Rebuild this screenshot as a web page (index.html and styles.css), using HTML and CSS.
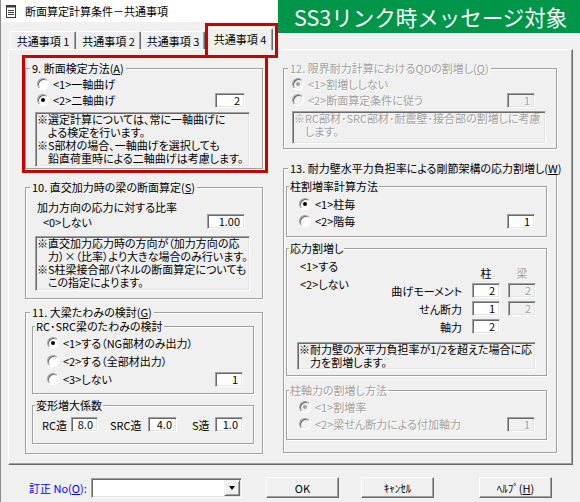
FILE: index.html
```html
<!DOCTYPE html>
<html lang="ja">
<head>
<meta charset="utf-8">
<title>断面算定計算条件－共通事項</title>
<link rel="stylesheet" href="styles.css">
</head>
<body>
<div class="window">
  <div class="titlebar">
    <svg class="app-icon" width="10" height="13" viewBox="0 0 10 13"><rect x="0.5" y="0.5" width="9" height="12" fill="#fff" stroke="#3c3c3c"/><rect x="0.5" y="0.5" width="9" height="2" fill="#3c3c3c"/><path d="M2 5.5h6M2 7.5h6M2 9.5h6" stroke="#3c3c3c"/></svg>
    <span class="title">断面算定計算条件－共通事項</span>
  </div>
  <div class="tabs">
    <div class="tab t1">共通事項 1</div>
    <div class="tab t2">共通事項 2</div>
    <div class="tab t3">共通事項 3</div>
    <div class="tab t4 active">共通事項 4</div>
  </div>
  <div class="panel">
    <div class="col col-left">
      <fieldset class="group g9">
        <legend>9. 断面検定方法(<u>A</u>)</legend>
        <div class="gbody">
          <div class="opt"><span class="radio"></span><span>&lt;1&gt;一軸曲げ</span></div>
          <div class="opt"><span class="radio on"></span><span>&lt;2&gt;二軸曲げ</span><span class="field">2</span></div>
          <div class="note">
            <p>※選定計算については、常に一軸曲げに<br>よる検定を行います。</p>
            <p>※S部材の場合、一軸曲げを選択しても<br>鉛直荷重時による二軸曲げは考慮します。</p>
          </div>
        </div>
      </fieldset>
      <fieldset class="group g10">
        <legend>10. 直交加力時の梁の断面算定(<u>S</u>)</legend>
        <div class="gbody">
          <div class="ratio-label">加力方向の応力に対する比率</div>
          <div class="ratio-row"><span>&lt;0&gt;しない</span><span class="field">1.00</span></div>
          <div class="note">
            <p>※直交加力応力時の方向が（加力方向の応<br>力）×（比率）より大きな場合のみ行います。</p>
            <p>※S柱梁接合部パネルの断面算定についても<br>この指定によります。</p>
          </div>
        </div>
      </fieldset>
      <fieldset class="group g11">
        <legend>11. 大梁たわみの検討(<u>G</u>)</legend>
        <div class="gbody">
          <fieldset class="group sub s11a">
            <legend>RC･SRC梁のたわみの検討</legend>
            <div class="gbody">
              <div class="opt"><span class="radio on"></span><span>&lt;1&gt;する（NG部材のみ出力）</span></div>
              <div class="opt"><span class="radio"></span><span>&lt;2&gt;する（全部材出力）</span></div>
              <div class="opt"><span class="radio"></span><span>&lt;3&gt;しない</span><span class="field">1</span></div>
            </div>
          </fieldset>
          <fieldset class="group sub s11b">
            <legend>変形増大係数</legend>
            <div class="gbody">
              <div class="coef-row">
                <span class="lbl l-rc">RC造</span><span class="field f-rc">8.0</span>
                <span class="lbl l-src">SRC造</span><span class="field f-src">4.0</span>
                <span class="lbl l-s">S造</span><span class="field f-s">1.0</span>
              </div>
            </div>
          </fieldset>
        </div>
      </fieldset>
    </div>
    <div class="col col-right">
      <fieldset class="group g12 disabled">
        <legend>12. 限界耐力計算におけるQDの割増し(<u>Q</u>)</legend>
        <div class="gbody">
          <div class="opt"><span class="radio on"></span><span>&lt;1&gt;割増ししない</span></div>
          <div class="opt"><span class="radio"></span><span>&lt;2&gt;断面算定条件に従う</span><span class="field">1</span></div>
          <div class="note">
            <p>※RC部材･SRC部材･耐震壁･接合部の割増しに考慮<br>します。</p>
          </div>
        </div>
      </fieldset>
      <fieldset class="group g13">
        <legend>13. 耐力壁水平力負担率による剛節架構の応力割増し(<u>W</u>)</legend>
        <div class="gbody">
          <fieldset class="group sub s13a">
            <legend>柱割増率計算方法</legend>
            <div class="gbody">
              <div class="opt"><span class="radio on"></span><span>&lt;1&gt;柱毎</span></div>
              <div class="opt"><span class="radio"></span><span>&lt;2&gt;階毎</span><span class="field">1</span></div>
            </div>
          </fieldset>
          <fieldset class="group sub s13b">
            <legend>応力割増し</legend>
            <div class="gbody">
              <div class="stress">
                <div class="flags">
                  <div>&lt;1&gt;する</div>
                  <div>&lt;2&gt;しない</div>
                </div>
                <div class="grid">
                  <span></span><span class="hd">柱</span><span class="hd hd-off">梁</span>
                  <span class="rl">曲げモーメント</span><span class="field">2</span><span class="cell-b"><span class="field off">2</span></span>
                  <span class="rl">せん断力</span><span class="field">1</span><span class="cell-b"><span class="field off">2</span></span>
                  <span class="rl">軸力</span><span class="field">2</span><span></span>
                </div>
              </div>
              <div class="note">
                <p>※耐力壁の水平力負担率が1/2を超えた場合に応<br>力を割増します。</p>
              </div>
            </div>
          </fieldset>
          <fieldset class="group sub s13c disabled">
            <legend>柱軸力の割増し方法</legend>
            <div class="gbody">
              <div class="opt"><span class="radio on"></span><span>&lt;1&gt;割増率</span></div>
              <div class="opt"><span class="radio"></span><span>&lt;2&gt;梁せん断力による付加軸力</span><span class="field">1</span></div>
            </div>
          </fieldset>
        </div>
      </fieldset>
    </div>
  </div>
  <div class="footer">
    <span class="fix-label">訂正 No(<u>O</u>):</span>
    <div class="combo"><span class="combo-btn"><span class="tri"></span></span></div>
    <div class="btn b-ok">OK</div>
    <div class="btn b-cancel">ｷｬﾝｾﾙ</div>
    <div class="btn b-help">ﾍﾙﾌﾟ(<u>H</u>)</div>
  </div>

  <div class="banner">SS3リンク時メッセージ対象</div>
  <div class="mark mark-tab"></div>
  <div class="mark mark-g9"></div>
</div>
</body>
</html>
```

FILE: styles.css
```css
* { box-sizing: border-box; }
html, body { margin: 0; padding: 0; }
body {
  width: 580px;
  height: 502px;
  overflow: hidden;
  background: #f0f0f0;
  font-family: "Noto Sans CJK JP", "Noto Sans", sans-serif;
  font-size: 11px;
  line-height: 14px;
  color: #000;
  font-feature-settings: "palt";
}
u { text-underline-offset: 1px; }
p { margin: 0; }

.window {
  position: relative;
  width: 580px;
  height: 502px;
  border-left: 1px solid #8c8c8c;
  background: #f0f0f0;
}

/* title bar */
.titlebar {
  height: 22px;
  background: #fff;
  display: flex;
  align-items: center;
  padding-left: 5px;
  gap: 9px;
}
.app-icon { flex: none; }
.title { font-size: 11px; }

/* tabs */
.tabs {
  height: 27px;
  display: flex;
  align-items: flex-end;
  padding-left: 9px;
  position: relative;
  z-index: 2;
}
.tab {
  height: 18px;
  display: flex;
  align-items: center;
  justify-content: center;
  border-top: 1px solid #fff;
  border-left: 1px solid #fff;
  border-right: 1px solid #696969;
  box-shadow: inset -1px 0 0 #a0a0a0;
  border-radius: 2px 2px 0 0;
  background: #f0f0f0;
  white-space: nowrap;
}
.t1 { width: 66px; }
.t2 { width: 65px; border-left-color: #f0f0f0; }
.t3 { width: 64px; border-left-color: #f0f0f0; }
.t4 { width: 66px; margin-left: 2px; }
.tab.active {
  height: 22px;
  margin-bottom: -1px;
  padding-bottom: 2px;
}

/* panel */
.panel {
  height: 416px;
  width: 565px;
  margin-left: 7px;
  border: 1px solid;
  border-color: #fff #696969 #696969 #fff;
  box-shadow: inset -1px -1px 0 #a0a0a0;
  display: flex;
  gap: 20px;
  padding: 11px 0 0 16px;
}
.col { display: flex; flex-direction: column; }
.col-left { width: 238px; }
.col-right { width: 274px; }

/* group boxes */
.group {
  margin: 0;
  padding: 0;
  min-width: 0;
  border: 1px solid #a0a0a0;
  box-shadow: 1px 1px 0 #fff, inset 1px 1px 0 #fff;
}
.group > legend {
  margin-left: 4px;
  padding: 0 2px;
  line-height: 14px;
  background: #f0f0f0;
  white-space: nowrap;
}
.group.sub > legend { margin-left: 2px; padding: 0 1px; }

.opt {
  display: flex;
  align-items: center;
  height: 16px;
  gap: 4px;
  white-space: nowrap;
}
.opt .field { margin-left: auto; }

/* radio */
.radio {
  position: relative;
  flex: none;
  width: 12px;
  height: 12px;
  border-radius: 50%;
  border: 1px solid;
  border-color: #a0a0a0 #fff #fff #a0a0a0;
  background: #fff;
  box-shadow: inset 1px 1px 0 #696969;
}
.radio.on::after {
  content: "";
  position: absolute;
  left: 3px;
  top: 3px;
  width: 4px;
  height: 4px;
  border-radius: 50%;
  background: #000;
}

/* edit field */
.field {
  flex: none;
  display: block;
  height: 15px;
  border: 1px solid;
  border-color: #a0a0a0 #fff #fff #a0a0a0;
  box-shadow: inset 1px 1px 0 #696969, inset -1px -1px 0 #e3e3e3;
  background: #fff;
  text-align: right;
  padding-right: 4px;
  line-height: 13px;
  font-size: 11px;
}

/* note */
.note {
  border: 1px solid;
  border-color: #a0a0a0 #fff #fff #a0a0a0;
  box-shadow: inset 1px 1px 0 #696969, inset -1px -1px 0 #e3e3e3;
  padding: 0 0 0 1px;
  line-height: 13px;
  white-space: nowrap;
}
.note p {
  padding-left: 11px;
  text-indent: -11px;
}

/* disabled */
.disabled, .disabled legend, .disabled .note { color: #a0a0a0; text-shadow: 1px 1px 0 #fff; }
.disabled .radio { background: #f0f0f0; }
.disabled .radio.on::after { background: #a0a0a0; }
.disabled .field, .field.off { background: #f0f0f0; color: #a0a0a0; text-shadow: 1px 1px 0 #fff; }

/* group 9 */
.g9 { height: 108px; }
.g9 > .gbody { padding: 1px 12px 0 9px; }
.g9 .opt { margin-left: 2px; }
.g9 .opt .field { width: 30px; margin-right: 5px; }
.g9 .note { margin-top: 4px; height: 55px; }

/* group 10 */
.g10 { margin-top: 11px; height: 119px; }
.g10 > .gbody { padding: 0 12px 0 9px; }
.ratio-label { margin-top: 6px; height: 14px; margin-left: 2px; }
.ratio-row { display: flex; align-items: center; height: 15px; }
.ratio-row > span:first-child { margin-left: 8px; }
.ratio-row .field { width: 38px; margin-left: auto; margin-right: 5px; }
.g10 .note { margin-top: 7px; height: 55px; }

/* group 11 */
.g11 { margin-top: 6px; height: 149px; }
.g11 > .gbody { padding: 0 8px 0 6px; }
.s11a { height: 75px; }
.s11a > .gbody { padding: 1px 10px 0 14px; }
.s11a .opt { height: 18px; }
.s11a .field { width: 28px; }
.s11b { margin-top: 4px; height: 46px; }
.s11b > .gbody { padding: 5px 0 0 9px; }
.coef-row { display: flex; align-items: center; height: 15px; white-space: nowrap; }
.l-rc { width: 29px; }
.f-rc { width: 27px; }
.l-src { width: 38px; margin-left: 12px; }
.f-src { width: 29px; }
.l-s { width: 23px; margin-left: 15px; }
.f-s { width: 28px; }

/* group 12 */
.g12 { height: 88px; }
.g12 > .gbody { padding: 1px 10px 0 8px; }
.g12 .field { width: 28px; margin-right: 11px; }
.g12 .note { margin-top: 3px; height: 33px; }

/* group 13 */
.g13 { margin-top: 12px; height: 292px; }
.g13 > .gbody { padding: 0 9px 0 2px; }
.s13a { margin-top: 4px; height: 58px; }
.s13a > .gbody { padding: 3px 0 0 12px; }
.s13a .opt { margin-bottom: 1px; }
.s13a .field { width: 28px; margin-right: 11px; }

.s13b { margin-top: 4px; height: 135px; }
.s13b > .gbody { padding: 0 10px 0 13px; }
.stress { display: flex; }
.flags { margin-top: 4px; display: flex; flex-direction: column; gap: 4px; white-space: nowrap; }
.grid {
  margin-left: auto;
  margin-top: 12px;
  display: grid;
  grid-template-columns: auto 28px 36px;
  grid-template-rows: 13px 15px 15px 15px;
  row-gap: 3px;
  align-items: center;
}
.grid .field { width: 28px; }
.hd { text-align: center; line-height: 13px; }
.hd-off { padding-left: 8px; color: #a0a0a0; text-shadow: 1px 1px 0 #fff; }
.rl { text-align: right; padding-right: 10px; white-space: nowrap; }
.cell-b { padding-left: 8px; }
.s13b .note { margin-top: 8px; height: 28px; margin-left: -3px; }

.s13c { margin-top: 7px; height: 57px; }
.s13c > .gbody { padding: 2px 0 0 12px; }
.s13c .opt { margin-bottom: 1px; }
.s13c .field { width: 28px; margin-right: 11px; }

/* footer */
.footer {
  height: 37px;
  display: flex;
  align-items: center;
  padding: 12px 0 4px 28px;
}
.fix-label { color: #0000ff; white-space: nowrap; width: 57px; }
.combo {
  margin-left: 5px;
  width: 151px;
  height: 20px;
  border: 1px solid;
  border-color: #a0a0a0 #fff #fff #a0a0a0;
  box-shadow: inset 1px 1px 0 #696969, inset -1px -1px 0 #e3e3e3;
  background: #fff;
  display: flex;
  justify-content: flex-end;
  padding: 1px;
}
.combo-btn {
  width: 16px;
  height: 100%;
  border: 1px solid;
  border-color: #f0f0f0 #696969 #696969 #f0f0f0;
  box-shadow: inset 1px 1px 0 #fff, inset -1px -1px 0 #a0a0a0;
  background: #f0f0f0;
  display: flex;
  align-items: center;
  justify-content: center;
}
.tri {
  width: 0;
  height: 0;
  border-left: 3.5px solid transparent;
  border-right: 3.5px solid transparent;
  border-top: 4px solid #000;
}
.btn {
  width: 73px;
  height: 21px;
  border: 1px solid;
  border-color: #fff #696969 #696969 #fff;
  box-shadow: inset -1px -1px 0 #a0a0a0;
  background: #f0f0f0;
  display: flex;
  align-items: center;
  justify-content: center;
  white-space: nowrap;
}
.b-ok { margin-left: 24px; }
.b-cancel { margin-left: 22px; }
.b-help { margin-left: 45px; }

/* overlays */
.banner {
  position: absolute;
  left: 277px;
  top: 0;
  width: 303px;
  height: 33px;
  background: #00964a;
  color: #fff;
  font-size: 21.5px;
  line-height: 33px;
  padding-left: 16px;
  white-space: nowrap;
  font-feature-settings: normal;
  z-index: 5;
}
.mark {
  position: absolute;
  border: 3px solid #cc0000;
  z-index: 6;
}
.mark-tab { left: 204px; top: 23px; width: 73px; height: 35px; }
.mark-g9 { left: 21px; top: 55px; width: 246px; height: 118px; }
```
